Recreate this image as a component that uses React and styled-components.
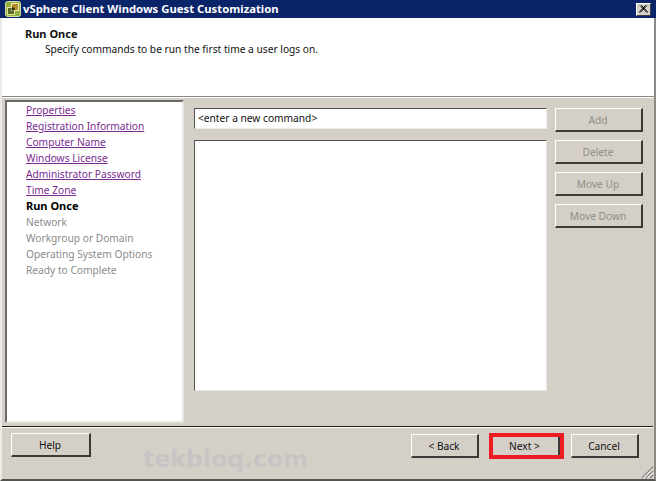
import React from "react";
import styled, { createGlobalStyle } from "styled-components";

const Global = createGlobalStyle`
  html, body { margin: 0; padding: 0; background: #d4d0c8; }
  #root { width: 656px; height: 481px; overflow: hidden; }
`;

const Win = styled.div`
  position: relative;
  box-sizing: border-box;
  width: 656px;
  height: 481px;
  background: #d4d0c8;
  border-left: 2px solid #ecebe6;
  border-right: 2px solid #8c8a85;
  border-bottom: 2px solid #55534f;
  display: flex;
  flex-direction: column;
  font-family: "Noto Sans", Tahoma, sans-serif;
  font-size: 10.2px;
  color: #111;
`;

const Title = styled.div`
  height: 18px;
  box-sizing: border-box;
  margin: 0 -2px 0 -2px;
  padding: 0 3px 0 5px;
  background: #0a246a;
  display: flex;
  align-items: center;
  gap: 2px;
  color: #fff;
  font-weight: 700;
  font-size: 11.3px;
  flex: none;
`;

const TitleText = styled.span`
  flex: 1;
  line-height: 16px;
  padding-bottom: 1px;
`;

const CloseBtn = styled.div`
  width: 15px;
  height: 13px;
  margin-right: 2px;
  background: #d4d0c8;
  border: 1px solid;
  border-color: #fff #404040 #404040 #fff;
  display: flex;
  align-items: center;
  justify-content: center;
  box-sizing: border-box;
`;

const Header = styled.div`
  height: 79px;
  box-sizing: border-box;
  background: #fff;
  border-bottom: 1px solid #8a8884;
  box-shadow: 0 1px 0 #fff;
  padding: 9px 0 0 23px;
  flex: none;
`;

const HeaderTitle = styled.div`
  font-weight: 700;
  font-size: 11px;
  line-height: 14px;
`;

const HeaderSub = styled.div`
  line-height: 14px;
  margin-top: 1px;
  padding-left: 20px;
`;

const Body = styled.div`
  flex: 1;
  min-height: 0;
  display: flex;
  padding: 3px 0 3px 3px;
`;

const Steps = styled.nav`
  box-sizing: border-box;
  width: 179px;
  height: 323px;
  background: #fff;
  border: 2px solid;
  border-color: #6b6965 #e8e6e1 #e8e6e1 #6b6965;
  padding: 0 0 0 19px;
  display: flex;
  flex-direction: column;
  flex: none;
`;

const Step = styled.div`
  height: 16px;
  line-height: 16px;
  white-space: nowrap;
  color: ${p => (p.$kind === "done" ? "#7a2a90" : p.$kind === "now" ? "#000" : "#8b8b8b")};
  font-weight: ${p => (p.$kind === "now" ? 700 : 400)};
  font-size: ${p => (p.$kind === "now" ? "11px" : "inherit")};
  text-decoration: ${p => (p.$kind === "done" ? "underline" : "none")};
`;

const Center = styled.div`
  width: 353px;
  margin-left: 10px;
  padding-top: 8px;
  display: flex;
  flex-direction: column;
  gap: 11px;
  flex: none;
`;

const Input = styled.div`
  box-sizing: border-box;
  height: 21px;
  background: #fff;
  border: 1px solid;
  border-color: #55534f #efeeea #efeeea #55534f;
  padding-left: 3px;
  line-height: 18px;
`;

const ListBox = styled.div`
  box-sizing: border-box;
  height: 251px;
  background: #fff;
  border: 1px solid;
  border-color: #55534f #e8e6e1 #e8e6e1 #55534f;
`;

const Side = styled.div`
  margin-left: 8px;
  padding-top: 8px;
  display: flex;
  flex-direction: column;
  gap: 8px;
`;

const Btn = styled.div`
  box-sizing: border-box;
  width: ${p => p.$w}px;
  height: 24px;
  margin-top: ${p => p.$drop || 0}px;
  padding-right: 1px;
  background: #d4d0c8;
  border-top: 1px solid #fff;
  border-left: 1px solid #fff;
  border-right: 2px solid #3c3a38;
  border-bottom: 2px solid #3c3a38;
  display: flex;
  align-items: center;
  justify-content: center;
  color: ${p => (p.$off ? "#8f8d89" : "#111")};
`;

const Footer = styled.div`
  margin-right: 1px;
  border-top: 1px solid #1c1c1c;
  box-shadow: inset 0 1px 0 #fff;
  height: 53px;
  box-sizing: border-box;
  padding: 6px 14px 0 9px;
  display: flex;
  align-items: flex-start;
  flex: none;
`;

const Spacer = styled.div`
  flex: 1;
`;

const NextFrame = styled.div`
  box-sizing: border-box;
  margin: 0 7px 0 10px;
  height: 26px;
  width: 75px;
  padding-right: 4px;
  border: 4px solid #ed1c24;
  background: #d4d0c8;
  display: flex;
  align-items: center;
  justify-content: center;
  position: relative;
`;

const NextEdge = styled.span`
  position: absolute;
  top: 0;
  right: 0;
  width: 2px;
  height: 100%;
  background: #3c3a38;
`;

const Watermark = styled.div`
  position: absolute;
  left: 141px;
  top: 442px;
  font-family: "DejaVu Sans", sans-serif;
  font-weight: 700;
  font-size: 23.6px;
  line-height: 34px;
  color: #c6c5c4;
`;

const Grip = styled.svg`
  position: absolute;
  right: 0;
  bottom: 0;
`;

const Logo = () => (
  <svg width="16" height="16" viewBox="0 0 16 16" style={{ flex: "none" }}>
    <rect x="0.5" y="0.5" width="15" height="15" rx="2" fill="#8fae3c" stroke="#d6e2a8" />
    <rect x="2.5" y="6.5" width="7" height="7" fill="#5b6b24" stroke="#e9e4a0" />
    <rect x="6.5" y="2.5" width="7" height="7" fill="#b58a2a" stroke="#f3ecb0" />
    <rect x="6.5" y="6.5" width="3" height="3" fill="#26330f" />
  </svg>
);

const done = ["Properties", "Registration Information", "Computer Name", "Windows License", "Administrator Password", "Time Zone"];
const todo = ["Network", "Workgroup or Domain", "Operating System Options", "Ready to Complete"];
const sideButtons = ["Add", "Delete", "Move Up", "Move Down"];

export default function App() {
  return (
    <>
      <Global />
      <Win>
        <Title>
          <Logo />
          <TitleText>vSphere Client Windows Guest Customization</TitleText>
          <CloseBtn>
            <svg width="9" height="8" viewBox="0 0 9 8">
              <path d="M1 0.5L8 7.5M2.5 0.5L9 7.5M8 0.5L1 7.5M6.5 0.5L0 7.5" stroke="#000" strokeWidth="1" fill="none" />
            </svg>
          </CloseBtn>
        </Title>
        <Header>
          <HeaderTitle>Run Once</HeaderTitle>
          <HeaderSub>Specify commands to be run the first time a user logs on.</HeaderSub>
        </Header>
        <Body>
          <Steps>
            {done.map(s => <Step key={s} $kind="done">{s}</Step>)}
            <Step $kind="now">Run Once</Step>
            {todo.map(s => <Step key={s} $kind="todo">{s}</Step>)}
          </Steps>
          <Center>
            <Input>&lt;enter a new command&gt;</Input>
            <ListBox />
          </Center>
          <Side>
            {sideButtons.map(b => <Btn key={b} $w={88} $off>{b}</Btn>)}
          </Side>
        </Body>
        <Footer>
          <Btn $w={80}>Help</Btn>
          <Spacer />
          <Btn $w={68} $drop={1}>&lt; Back</Btn>
          <NextFrame>Next &gt;<NextEdge /></NextFrame>
          <Btn $w={68} $drop={1}>Cancel</Btn>
        </Footer>
        <Watermark>tekbloq.com</Watermark>
        <Grip width="14" height="14" viewBox="0 0 14 14">
          <path d="M13 2L2 13M13 6L6 13M13 10L10 13" stroke="#7f7d79" strokeWidth="1.2" />
          <path d="M13 3.5L3.5 13M13 7.5L7.5 13" stroke="#fff" strokeWidth="1" />
        </Grip>
      </Win>
    </>
  );
}
